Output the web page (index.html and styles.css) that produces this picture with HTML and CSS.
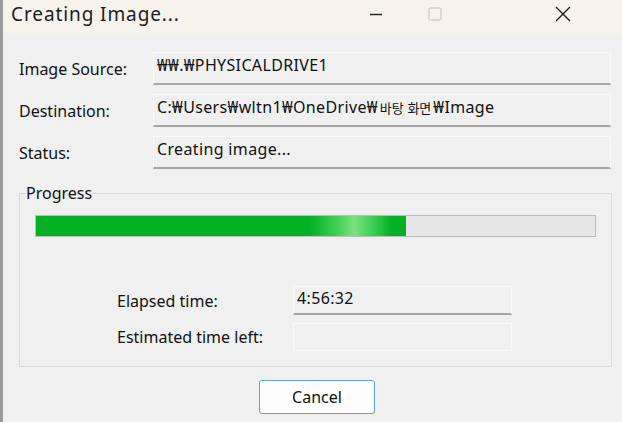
FILE: index.html
```html
<!DOCTYPE html>
<html lang="ko">
<head>
<meta charset="utf-8">
<title>Creating Image...</title>
<link rel="stylesheet" href="styles.css">
</head>
<body>
<div class="window">
  <div class="titlebar">
    <span class="title">Creating Image...</span>
    <div class="controls">
      <span class="ctl min"><svg width="14" height="14" viewBox="0 0 14 14"><path d="M1 7.5h12" stroke="#1a1a1a" stroke-width="1.4"/></svg></span>
      <span class="ctl max"><svg width="14" height="14" viewBox="0 0 14 14"><rect x="1" y="1" width="12" height="12" rx="1.5" fill="none" stroke="#bdbdbd" stroke-width="1"/></svg></span>
      <span class="ctl close"><svg width="16" height="16" viewBox="0 0 16 16"><path d="M1 1L15 15M15 1L1 15" stroke="#1a1a1a" stroke-width="1.3"/></svg></span>
    </div>
  </div>
  <div class="content">
    <div class="fields">
      <div class="row">
        <span class="label">Image Source:</span>
        <div class="box">₩₩.₩PHYSICALDRIVE1</div>
      </div>
      <div class="row">
        <span class="label">Destination:</span>
        <div class="box">C:₩Users₩wltn1₩OneDrive₩<span class="ko">바탕 화면</span>₩Image</div>
      </div>
      <div class="row">
        <span class="label">Status:</span>
        <div class="box">Creating image...</div>
      </div>
    </div>
    <fieldset class="group">
      <legend>Progress</legend>
      <div class="bar"><div class="fill" style="width:66.2%"></div></div>
      <div class="times">
        <div class="trow">
          <span class="tlabel">Elapsed time:</span>
          <div class="box tbox">4:56:32</div>
        </div>
        <div class="trow">
          <span class="tlabel">Estimated time left:</span>
          <div class="box tbox empty"></div>
        </div>
      </div>
    </fieldset>
    <div class="actions">
      <button class="btn">Cancel</button>
    </div>
  </div>
</div>
</body>
</html>
```
FILE: styles.css
```css
* { box-sizing: border-box; }
html, body { margin: 0; padding: 0; }
body {
  width: 622px;
  height: 422px;
  overflow: hidden;
  background: #f0f0f0;
  font-family: "Noto Sans", "Noto Sans CJK KR", sans-serif;
  color: #111;
}
.window {
  height: 422px;
  border-left: 3px solid #9a9a9a;
  display: flex;
  flex-direction: column;
  background: #f0f0f0;
}
.titlebar {
  height: 33px;
  background: #f6f3ec;
  display: flex;
  align-items: flex-start;
  padding: 1px 0 0 8px;
}
.title {
  font-size: 19px;
  letter-spacing: 0.9px;
  line-height: 26px;
  color: #1b1b1b;
  flex: 1;
}
.controls {
  display: flex;
  align-items: center;
  height: 26px;
}
.ctl {
  display: flex;
  align-items: center;
  justify-content: center;
  height: 100%;
}
.min { width: 14px; margin-right: 45px; }
.max { width: 14px; margin-right: 113px; }
.close { width: 16px; margin-right: 51px; }
.content {
  padding: 19px 8px 0 16px;
}
.fields {
  display: flex;
  flex-direction: column;
  gap: 9px;
}
.row {
  display: flex;
  align-items: center;
}
.label {
  width: 134px;
  font-size: 16px;
}
.box {
  width: 458px;
  height: 33px;
  background: #f0f0f0;
  border: 1px solid #f9f9f9;
  border-bottom: 2px solid #a6a6a6;
  font-size: 16px;
  letter-spacing: 0.35px;
  padding: 1px 0 0 3px;
  line-height: 22px;
  white-space: nowrap;
}
.ko {
  font-family: "Noto Sans CJK KR", sans-serif;
  font-size: 13px;
  letter-spacing: 0;
  padding: 0 2px;
}
.group {
  margin: 14px 0 0 0;
  width: 593px;
  height: 184px;
  border: 1px solid #dcdcdc;
  padding: 12px 15px 0 15px;
}
.group legend {
  font-size: 16px;
  padding: 0;
  margin-left: -9px;
  line-height: 20px;
}
.bar {
  height: 22px;
  background: #e6e6e6;
  border: 1px solid #bcbcbc;
}
.fill {
  height: 100%;
  background: linear-gradient(90deg, #06b025 0%, #06b025 74%, #3ccf55 81%, #7ae27f 86%, #3ccf55 91%, #06b025 96%, #06b025 100%);
}
.times {
  display: flex;
  flex-direction: column;
  gap: 8px;
  margin-top: 49px;
  padding-left: 82px;
}
.trow {
  display: flex;
  align-items: center;
}
.tlabel {
  width: 176px;
  font-size: 16px;
}
.tbox {
  width: 219px;
  height: 29px;
  padding-top: 0;
}
.tbox.empty {
  border-bottom: 1px solid #f9f9f9;
  height: 28px;
}
.actions {
  padding: 13px 0 0 240px;
}
.btn {
  width: 116px;
  height: 34px;
  background: #fdfdfd;
  border: 1px solid #62a0da;
  border-radius: 3px;
  font-family: "Noto Sans", sans-serif;
  font-size: 16px;
  color: #111;
  padding: 0;
}
```
